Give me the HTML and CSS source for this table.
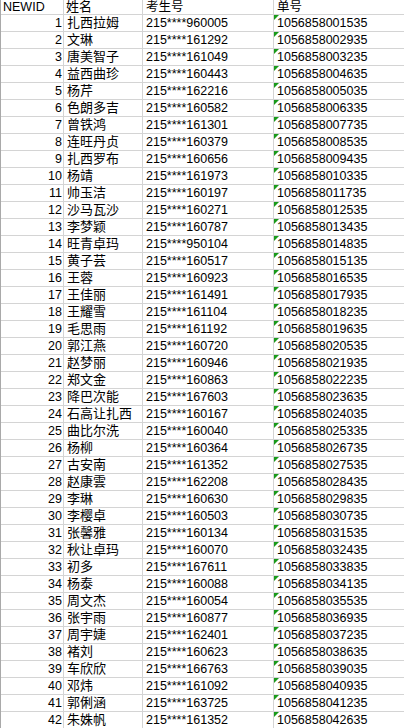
FILE: index.html
```html
<!DOCTYPE html>
<html lang="zh-CN">
<head>
<meta charset="utf-8">
<title>Sheet</title>
<link rel="stylesheet" href="styles.css">
</head>
<body>
<div class="sheet">
<div class="c a h">NEWID</div><div class="c b h">姓名</div><div class="c n h">考生号</div><div class="c d h">单号</div>
<div class="c a">1</div><div class="c b">扎西拉姆</div><div class="c n">215****960005</div><div class="c d t">1056858001535</div>
<div class="c a">2</div><div class="c b">文琳</div><div class="c n">215****161292</div><div class="c d t">1056858002935</div>
<div class="c a">3</div><div class="c b">唐美智子</div><div class="c n">215****161049</div><div class="c d t">1056858003235</div>
<div class="c a">4</div><div class="c b">益西曲珍</div><div class="c n">215****160443</div><div class="c d t">1056858004635</div>
<div class="c a">5</div><div class="c b">杨芹</div><div class="c n">215****162216</div><div class="c d t">1056858005035</div>
<div class="c a">6</div><div class="c b">色朗多吉</div><div class="c n">215****160582</div><div class="c d t">1056858006335</div>
<div class="c a">7</div><div class="c b">曾铁鸿</div><div class="c n">215****161301</div><div class="c d t">1056858007735</div>
<div class="c a">8</div><div class="c b">连旺丹贞</div><div class="c n">215****160379</div><div class="c d t">1056858008535</div>
<div class="c a">9</div><div class="c b">扎西罗布</div><div class="c n">215****160656</div><div class="c d t">1056858009435</div>
<div class="c a">10</div><div class="c b">杨靖</div><div class="c n">215****161973</div><div class="c d t">1056858010335</div>
<div class="c a">11</div><div class="c b">帅玉洁</div><div class="c n">215****160197</div><div class="c d t">1056858011735</div>
<div class="c a">12</div><div class="c b">沙马瓦沙</div><div class="c n">215****160271</div><div class="c d t">1056858012535</div>
<div class="c a">13</div><div class="c b">李梦颖</div><div class="c n">215****160787</div><div class="c d t">1056858013435</div>
<div class="c a">14</div><div class="c b">旺青卓玛</div><div class="c n">215****950104</div><div class="c d t">1056858014835</div>
<div class="c a">15</div><div class="c b">黄子芸</div><div class="c n">215****160517</div><div class="c d t">1056858015135</div>
<div class="c a">16</div><div class="c b">王蓉</div><div class="c n">215****160923</div><div class="c d t">1056858016535</div>
<div class="c a">17</div><div class="c b">王佳丽</div><div class="c n">215****161491</div><div class="c d t">1056858017935</div>
<div class="c a">18</div><div class="c b">王耀雪</div><div class="c n">215****161104</div><div class="c d t">1056858018235</div>
<div class="c a">19</div><div class="c b">毛思雨</div><div class="c n">215****161192</div><div class="c d t">1056858019635</div>
<div class="c a">20</div><div class="c b">郭江燕</div><div class="c n">215****160720</div><div class="c d t">1056858020535</div>
<div class="c a">21</div><div class="c b">赵梦丽</div><div class="c n">215****160946</div><div class="c d t">1056858021935</div>
<div class="c a">22</div><div class="c b">郑文金</div><div class="c n">215****160863</div><div class="c d t">1056858022235</div>
<div class="c a">23</div><div class="c b">降巴次能</div><div class="c n">215****167603</div><div class="c d t">1056858023635</div>
<div class="c a">24</div><div class="c b">石高让扎西</div><div class="c n">215****160167</div><div class="c d t">1056858024035</div>
<div class="c a">25</div><div class="c b">曲比尔洗</div><div class="c n">215****160040</div><div class="c d t">1056858025335</div>
<div class="c a">26</div><div class="c b">杨柳</div><div class="c n">215****160364</div><div class="c d t">1056858026735</div>
<div class="c a">27</div><div class="c b">古安南</div><div class="c n">215****161352</div><div class="c d t">1056858027535</div>
<div class="c a">28</div><div class="c b">赵康雲</div><div class="c n">215****162208</div><div class="c d t">1056858028435</div>
<div class="c a">29</div><div class="c b">李琳</div><div class="c n">215****160630</div><div class="c d t">1056858029835</div>
<div class="c a">30</div><div class="c b">李樱卓</div><div class="c n">215****160503</div><div class="c d t">1056858030735</div>
<div class="c a">31</div><div class="c b">张馨雅</div><div class="c n">215****160134</div><div class="c d t">1056858031535</div>
<div class="c a">32</div><div class="c b">秋让卓玛</div><div class="c n">215****160070</div><div class="c d t">1056858032435</div>
<div class="c a">33</div><div class="c b">初多</div><div class="c n">215****167611</div><div class="c d t">1056858033835</div>
<div class="c a">34</div><div class="c b">杨泰</div><div class="c n">215****160088</div><div class="c d t">1056858034135</div>
<div class="c a">35</div><div class="c b">周文杰</div><div class="c n">215****160054</div><div class="c d t">1056858035535</div>
<div class="c a">36</div><div class="c b">张宇雨</div><div class="c n">215****160877</div><div class="c d t">1056858036935</div>
<div class="c a">37</div><div class="c b">周宇婕</div><div class="c n">215****162401</div><div class="c d t">1056858037235</div>
<div class="c a">38</div><div class="c b">褚刘</div><div class="c n">215****160623</div><div class="c d t">1056858038635</div>
<div class="c a">39</div><div class="c b">车欣欣</div><div class="c n">215****166763</div><div class="c d t">1056858039035</div>
<div class="c a">40</div><div class="c b">邓炜</div><div class="c n">215****161092</div><div class="c d t">1056858040935</div>
<div class="c a">41</div><div class="c b">郭俐涵</div><div class="c n">215****163725</div><div class="c d t">1056858041235</div>
<div class="c a">42</div><div class="c b">朱姝帆</div><div class="c n">215****161352</div><div class="c d t">1056858042635</div>
</div>
</body>
</html>
```
FILE: styles.css
```css
html, body {
  margin: 0;
  padding: 0;
  background: #ffffff;
  overflow: hidden;
}

.sheet {
  display: grid;
  grid-template-columns: 62px 78px 130px 130px;
  grid-template-rows: 14px repeat(42, 16px);
  gap: 1px;
  background: #d4d4d4;
  border-left: 1px solid #a9a9a9;
  width: max-content;
  font-family: "Liberation Sans", "Noto Sans CJK SC", sans-serif;
  font-size: 12.5px;
  color: #000000;
}

.c {
  background: #ffffff;
  line-height: 16px;
  white-space: nowrap;
  overflow: hidden;
  padding: 0 2px;
}

.h {
  line-height: 14px;
}

.a {
  text-align: right;
  padding-right: 1px;
}

.a.h {
  text-align: left;
}

.b {
  font-size: 13px;
  padding-left: 3px;
}

.b.h {
  padding-left: 2px;
}

.n {
  padding-left: 3px;
}

.d {
  padding-left: 3px;
}

.t {
  position: relative;
}

.t::before {
  content: "";
  position: absolute;
  left: 0;
  top: 0;
  border-top: 5px solid #1a9a1a;
  border-right: 5px solid transparent;
}
```
